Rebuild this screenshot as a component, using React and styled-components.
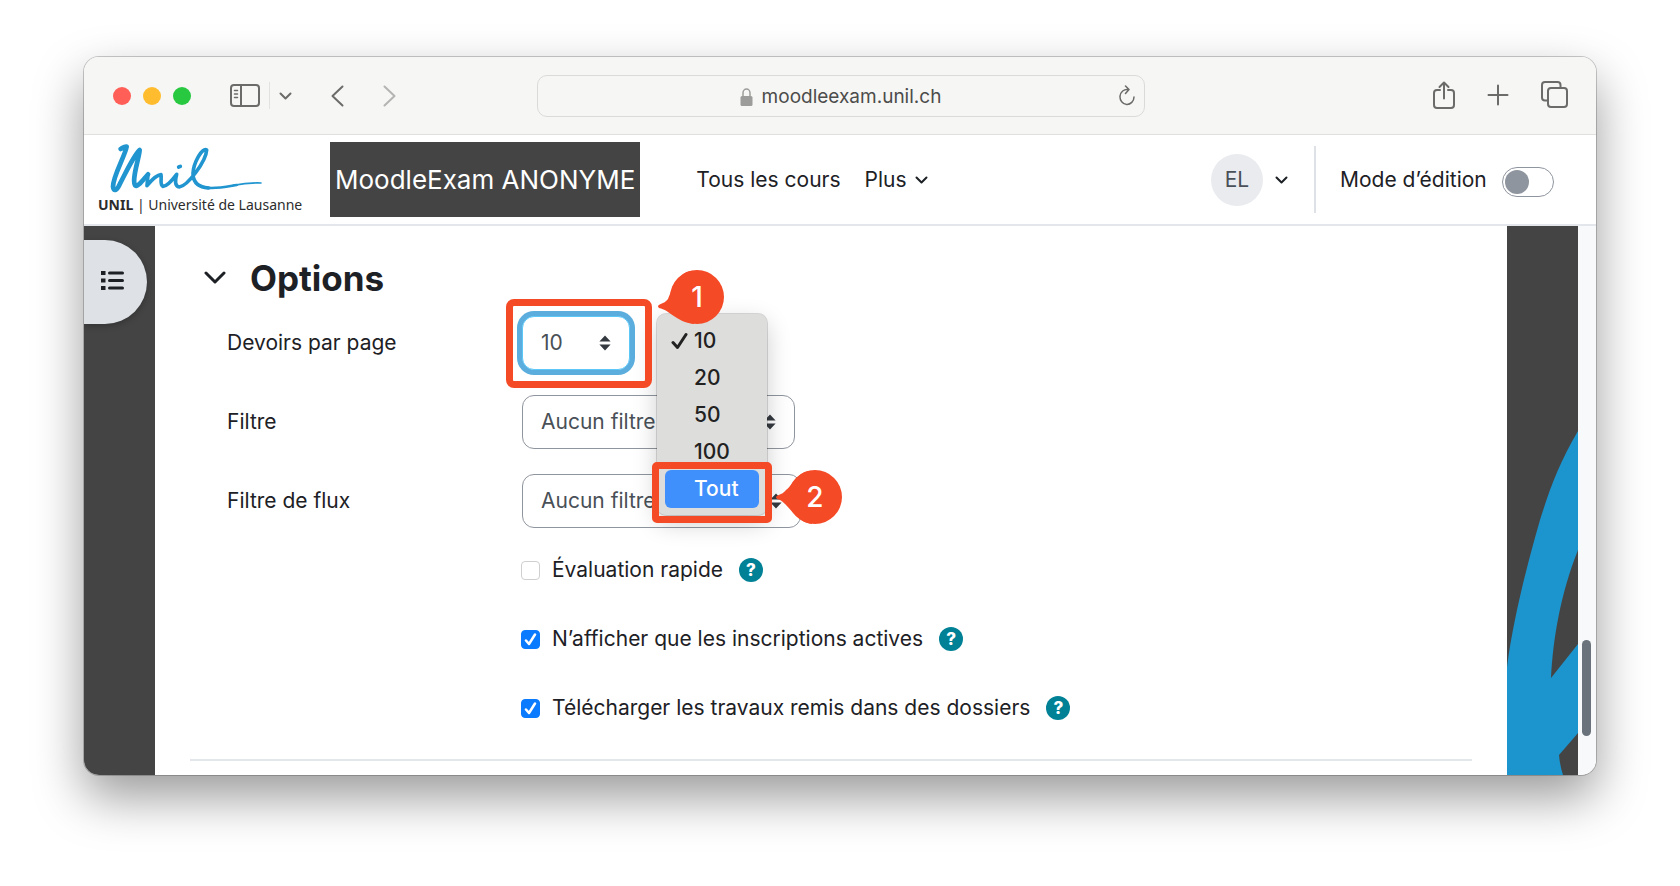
import { useState } from 'react';
import styled, { createGlobalStyle } from 'styled-components';

const GlobalStyle = createGlobalStyle`
	* {
		box-sizing: border-box;
	}

	body {
		margin: 0;
		background: #fff;
		color: #1d2125;
		font-family: Inter, "Liberation Sans", sans-serif;
		font-size: 21px;
		line-height: 32px;
	}

	button, input, select {
		margin: 0;
		font: inherit;
		color: inherit;
	}

	svg {
		display: block;
		flex: none;
	}
`;

const Desktop = styled.div`
	padding: 57px 84px 111px;
`;

const BrowserWindow = styled.div`
	overflow: hidden;
	border-radius: 15px;
	background: #fff;
	box-shadow: 0 0 0 1px rgba(0, 0, 0, .2), 0 22px 50px rgba(0, 0, 0, .4);
`;

// Browser toolbar
const Toolbar = styled.div`
	display: grid;
	grid-template-columns: 1fr minmax(0, 608px) 1fr;
	align-items: center;
	height: 78px;
	padding: 0 28px 0 29px;
	border-bottom: 1px solid #e0e0de;
	background: #f6f6f4;
	color: #6b6b69;
`;

const ToolbarSide = styled.div`
	display: flex;
	align-items: center;
	justify-content: ${({ $end }) => ($end ? 'flex-end' : 'flex-start')};
	gap: ${({ $gap }) => $gap}px;
`;

const SidebarGroup = styled.div`
	display: flex;
	align-items: center;
	gap: 9px;
`;

const Lights = styled.div`
	display: flex;
	gap: 12px;
`;

const Light = styled.button`
	width: 18px;
	height: 18px;
	padding: 0;
	border: 0;
	border-radius: 50%;
	background: ${({ $color }) => $color};
`;

const IconButton = styled.button`
	display: flex;
	padding: 0;
	border: 0;
	background: none;
	color: ${({ $muted }) => ($muted ? '#b4b4b2' : 'inherit')};
	cursor: pointer;
`;

const ToolbarRule = styled.span`
	width: 1px;
	height: 27px;
	background: #e2e2e0;
`;

const AddressBar = styled.div`
	display: grid;
	grid-template-columns: 1fr auto 1fr;
	align-items: center;
	height: 42px;
	padding: 0 8px;
	border: 1px solid #dadad8;
	border-radius: 10px;
`;

const Address = styled.div`
	display: flex;
	grid-column: 2;
	align-items: center;
	gap: 9px;
	padding-top: 2px;
	color: #4c4c4b;
	font-size: 19px;
`;

const ReloadSlot = styled.div`
	justify-self: end;
`;

// Site navigation
const Navbar = styled.header`
	display: flex;
	align-items: center;
	height: 91px;
	padding: 0 42px 0 14px;
	border-bottom: 2px solid #e3e6ea;
`;

const Brand = styled.a`
	display: flex;
	flex-direction: column;
	width: 232px;
	color: #2c2c2c;
	text-decoration: none;
`;

const Signature = styled.svg`
	margin-left: 12px;
`;

const BrandName = styled.span`
	font-family: "Noto Sans", sans-serif;
	font-size: 14px;
	line-height: 24px;
	white-space: nowrap;
`;

const SiteName = styled.div`
	display: flex;
	align-items: center;
	height: 75px;
	padding: 0 5px;
	background: #444;
	color: #fff;
	font-size: 26px;
	white-space: nowrap;
`;

const NavLinks = styled.nav`
	display: flex;
	align-items: center;
	gap: 24px;
	margin: 0 auto 0 56px;
`;

const NavLink = styled.a`
	display: flex;
	align-items: center;
	gap: 8px;
	color: inherit;
	text-decoration: none;
	white-space: nowrap;
`;

const UserButton = styled.button`
	display: flex;
	align-items: center;
	gap: 12px;
	padding: 0;
	border: 0;
	background: none;
	cursor: pointer;
`;

const Avatar = styled.span`
	display: grid;
	place-items: center;
	width: 52px;
	height: 52px;
	border-radius: 50%;
	background: #e9ebef;
	color: #495057;
`;

const EditMode = styled.label`
	display: flex;
	align-items: center;
	justify-content: space-between;
	gap: 12px;
	min-width: 240px;
	height: 67px;
	margin-left: 26px;
	padding-left: 24px;
	border-left: 2px solid #dee2e6;
	white-space: nowrap;
`;

const Switch = styled.input`
	appearance: none;
	display: flex;
	align-items: center;
	width: 52px;
	height: 30px;
	margin-top: 4px;
	padding: 2px;
	border: 1px solid #8f959e;
	border-radius: 15px;

	&::before {
		content: "";
		width: 24px;
		height: 24px;
		border-radius: 50%;
		background: #8f959e;
	}

	&:checked {
		justify-content: flex-end;
	}
`;

// Page
const Page = styled.div`
	display: flex;
	align-items: stretch;
`;

const SideBand = styled.aside`
	flex: none;
	width: 71px;
	padding-top: ${({ $top }) => $top || 0}px;
	background: #444;
`;

const DrawerToggle = styled.button`
	display: flex;
	align-items: center;
	width: 63px;
	height: 84px;
	padding: 0 0 0 16px;
	border: 0;
	border-radius: 0 42px 42px 0;
	background: #dee2e6;
	box-shadow: 0 2px 6px rgba(0, 0, 0, .25);
	cursor: pointer;
`;

const ScrollTrack = styled.div`
	flex: none;
	width: 18px;
	padding: 414px 5px 0 4px;
	background: #f8f9fa;
`;

const ScrollThumb = styled.div`
	height: 96px;
	border-radius: 5px;
	background: #6a737b;
`;

const Main = styled.main`
	flex: 1;
	min-width: 0;
	padding: 30px 35px 13px;
`;

const SectionTitle = styled.h3`
	display: flex;
	align-items: center;
	gap: 24px;
	margin: 0 0 16px;
	padding-left: 14px;
	font-size: 35px;
	font-weight: 700;
	line-height: 44px;
`;

const Fields = styled.div`
	display: grid;
	gap: 25px;
	padding-left: 37px;
`;

const Field = styled.div`
	display: grid;
	grid-template-columns: 295px 1fr;
	align-items: center;
`;

const Control = styled.div`
	position: relative;
	display: grid;
	justify-self: start;
	align-items: center;
	width: ${({ $width }) => $width}px;

	& > select, & > svg {
		grid-area: 1 / 1;
	}

	& > svg {
		justify-self: end;
		margin-right: 19px;
		pointer-events: none;
	}
`;

const Select = styled.select`
	appearance: none;
	width: 100%;
	height: 54px;
	padding: 0 48px 0 18px;
	border: 1px solid #8f959e;
	border-radius: 12px;
	background: #fff;
	color: #495057;
	outline: none;

	${({ $focused }) => $focused && `
		border-color: #5cc8fa;
		box-shadow: 0 0 0 5px #5aaddd;
	`}
`;

const Menu = styled.ul`
	position: absolute;
	z-index: 2;
	top: -2px;
	left: 135px;
	width: 110px;
	margin: 0;
	padding: 8px;
	border-radius: 9px;
	background: #dddddb;
	box-shadow: 0 0 0 1px rgba(0, 0, 0, .14), 0 8px 24px rgba(0, 0, 0, .2);
	list-style: none;
`;

const MenuItem = styled.li`
	display: flex;
	align-items: center;
	gap: 6px;
	height: 38px;
	margin-bottom: -1px;
	padding-left: 6px;
	border-radius: 6px;
	background: ${({ $active }) => ($active ? '#3f8ffc' : 'transparent')};
	color: ${({ $active }) => ($active ? '#fff' : '#222')};
	font-weight: 500;
	cursor: default;
`;

const TickSlot = styled.span`
	width: 17px;
`;

const Outline = styled.div`
	position: absolute;
	z-index: 3;
	top: ${({ $top }) => $top}px;
	left: ${({ $left }) => $left}px;
	width: ${({ $width }) => $width}px;
	height: ${({ $height }) => $height}px;
	border: 7px solid #f54a26;
	border-radius: ${({ $radius }) => $radius}px;
	pointer-events: none;
`;

const Callout = styled.div`
	position: absolute;
	z-index: 4;
	top: ${({ $top }) => $top}px;
	left: ${({ $left }) => $left}px;
	display: grid;
	width: 66px;
	height: 54px;
	color: #fff;
	font-size: 28px;
	font-weight: 500;

	& > * {
		grid-area: 1 / 1;
	}
`;

const CalloutNumber = styled.span`
	place-self: center end;
	width: 54px;
	text-align: center;
`;

const Checks = styled.div`
	display: grid;
	justify-items: start;
	gap: 37px;
	padding: 26px 0 0 331px;
`;

const CheckRow = styled.div`
	display: flex;
	align-items: center;
	gap: 16px;
`;

const CheckLabel = styled.label`
	display: flex;
	align-items: center;
	gap: 12px;
`;

const CheckBox = styled.span`
	display: grid;
	place-items: center;

	& > * {
		grid-area: 1 / 1;
	}

	& > svg {
		pointer-events: none;
	}
`;

const CheckInput = styled.input`
	appearance: none;
	width: 19px;
	height: 19px;
	border: 1px solid #cfcfcf;
	border-radius: 4px;
	background: #fff;

	&:checked {
		border-color: #0a7aff;
		background: #0a7aff;
	}
`;

const HelpButton = styled.button`
	display: grid;
	place-items: center;
	width: 24px;
	height: 24px;
	padding: 0;
	border: 0;
	border-radius: 50%;
	background: #008196;
	color: #fff;
	font-size: 17px;
	font-weight: 800;
	line-height: 24px;
	cursor: pointer;
`;

const Divider = styled.hr`
	margin: 35px 0 0;
	border: 0;
	border-top: 2px solid #e3e6ea;
`;

const Stroke = ({ width, height, weight = 2, children }) => (
	<svg
		width={width}
		height={height}
		viewBox={`0 0 ${width} ${height}`}
		fill='none'
		stroke='currentColor'
		strokeWidth={weight}
		strokeLinecap='round'
		strokeLinejoin='round'
		aria-hidden='true'
	>
		{children}
	</svg>
);

const Chevron = () => (
	<Stroke width={13} height={8}>
		<path d='M1.5 1.5l5 5 5-5' />
	</Stroke>
);

const Arrows = () => (
	<svg width='12' height='16' viewBox='0 0 12 16' fill='#343a40' aria-hidden='true'>
		<path d='M6 .5L11.6 6.4H.4zM6 15.5L.4 9.6h11.2z' />
	</svg>
);

const NumberedCallout = ({ number, top, left, tip }) => (
	<Callout $top={top} $left={left}>
		<svg width='66' height='54' viewBox='0 0 66 54' fill='#f54a26' aria-hidden='true'>
			<circle cx='39' cy='27' r='27' />
			<path d={`M32 1C20 4 15 17 10 ${tip - 7}C7 ${tip - 3} 4 ${tip - 3} 1 ${tip - 1}Q-1 ${tip} 1 ${tip + 2}C12 ${tip + 4} 18 52 36 54z`} />
		</svg>
		<CalloutNumber>{number}</CalloutNumber>
	</Callout>
);

const PAGE_SIZES = ['10', '20', '50', '100', 'Tout'];

const CHECKS = [
	{ id: 'quick', label: 'Évaluation rapide', checked: false },
	{ id: 'active', label: 'N’afficher que les inscriptions actives', checked: true },
	{ id: 'folders', label: 'Télécharger les travaux remis dans des dossiers', checked: true },
];

function BrowserToolbar() {
	return (
		<Toolbar>
			<ToolbarSide $gap={39}>
				<Lights>
					<Light $color='#ff5f57' aria-label='Fermer' />
					<Light $color='#febc2e' aria-label='Réduire' />
					<Light $color='#28c840' aria-label='Agrandir' />
				</Lights>
				<SidebarGroup>
					<IconButton aria-label='Barre latérale'>
						<Stroke width={30} height={24}>
							<rect x='1' y='1' width='28' height='21' rx='3' />
							<path d='M11 1v21' />
							<path d='M4.5 6.5h3M4.5 10h3M4.5 13.5h3' strokeWidth='1.5' />
						</Stroke>
					</IconButton>
					<ToolbarRule />
					<IconButton aria-label='Groupes d’onglets'>
						<Chevron />
					</IconButton>
				</SidebarGroup>
				<IconButton aria-label='Précédent'>
					<Stroke width={13} height={22}>
						<path d='M11.5 1.500L1.5 11l10 9.5' />
					</Stroke>
				</IconButton>
				<IconButton $muted aria-label='Suivant'>
					<Stroke width={13} height={22}>
						<path d='M1.5 1.500L11.5 11l-10 9.5' />
					</Stroke>
				</IconButton>
			</ToolbarSide>
			<AddressBar>
				<Address>
					<svg width='13' height='18' viewBox='0 0 13 18' fill='#9c9c9a' aria-hidden='true'>
						<rect x='.5' y='8' width='12' height='10' rx='1.5' />
						<path d='M3 8.500V5a3.500 4 0 0 1 7 0v3.500' fill='none' stroke='#9c9c9a' strokeWidth='1.5' />
					</svg>
					<span>moodleexam.unil.ch</span>
				</Address>
				<ReloadSlot>
					<IconButton aria-label='Recharger'>
						<Stroke width={18} height={22} weight={1.5}>
							<path d='M10 4.500a7 7.500 0 1 0 6 7.500M7.500 1l3.500 3.500-3.500 4' />
						</Stroke>
					</IconButton>
				</ReloadSlot>
			</AddressBar>
			<ToolbarSide $end $gap={32}>
				<IconButton aria-label='Partager'>
					<Stroke width={22} height={30}>
						<path d='M7 9H4a3 3 0 0 0-3 3v12a3 3 0 0 0 3 3h14a3 3 0 0 0 3-3V12a3 3 0 0 0-3-3h-3M11 17.500V1.500M6.500 6L11 1.500 15.500 6' />
					</Stroke>
				</IconButton>
				<IconButton aria-label='Nouvel onglet'>
					<Stroke width={22} height={24}>
						<path d='M11 1.500v19M1.500 11h19' />
					</Stroke>
				</IconButton>
				<IconButton aria-label='Vue des onglets'>
					<Stroke width={27} height={29}>
						<path d='M7 19.500H4a3 3 0 0 1-3-3V4a3 3 0 0 1 3-3h12.500a3 3 0 0 1 3 3v3' />
						<rect x='7' y='7' width='19' height='19' rx='3' />
					</Stroke>
				</IconButton>
			</ToolbarSide>
		</Toolbar>
	);
}

function SiteNavbar() {
	return (
		<Navbar>
			<Brand href='#' aria-label='UNIL'>
				<Signature width='152' height='50' viewBox='120 306 456 150' fill='none' stroke='#2095cf' strokeLinecap='round' strokeLinejoin='round' aria-hidden='true'>
					<path strokeWidth='14' d='M152 324C158 321 162 316 170 317C165 345 129 405 129 437C130 454 142 448 150 428C165 400 190 345 209 327C210 342 184 415 195 433C202 442 222 412 234 400' />
					<path strokeWidth='11' d='M234 400L231 434C244 418 258 402 273 401C276 412 268 430 279 436C292 436 308 416 320 400C315 418 314 436 328 438C352 435 408 362 410 327C397 318 370 365 369 398C370 430 390 438 415 441' />
					<path strokeWidth='8' d='M408 440C440 444 470 437 500 432' />
					<path strokeWidth='5' d='M490 433C520 427 545 425 573 426' />
					<path strokeWidth='11' d='M326 378l5-2' />
				</Signature>
				<BrandName><b>UNIL</b> | Université de Lausanne</BrandName>
			</Brand>
			<SiteName>MoodleExam ANONYME</SiteName>
			<NavLinks>
				<NavLink href='#'>Tous les cours</NavLink>
				<NavLink href='#'>Plus <Chevron /></NavLink>
			</NavLinks>
			<UserButton aria-label='Menu utilisateur'>
				<Avatar>EL</Avatar>
				<Chevron />
			</UserButton>
			<EditMode>
				Mode d’édition
				<Switch type='checkbox' role='switch' />
			</EditMode>
		</Navbar>
	);
}

function PageSizeField() {
	const [size, setSize] = useState('10');

	return (
		<Field>
			<label htmlFor='perpage'>Devoirs par page</label>
			<Control $width={108}>
				<Select id='perpage' $focused value={size} onChange={(e) => setSize(e.target.value)}>
					{PAGE_SIZES.map((value) => <option key={value}>{value}</option>)}
				</Select>
				<Arrows />
				<Menu role='listbox' aria-label='Devoirs par page'>
					{PAGE_SIZES.map((value) => (
						<MenuItem
							key={value}
							role='option'
							aria-selected={value === size}
							$active={value === 'Tout'}
							onClick={() => setSize(value)}
						>
							<TickSlot>
								{value === size && (
									<Stroke width={17} height={18} weight={3}>
										<path d='M2 10.500l4.500 5L15 2.500' />
									</Stroke>
								)}
							</TickSlot>
							{value}
						</MenuItem>
					))}
				</Menu>
				<Outline $top={-17} $left={-16} $width={146} $height={89} $radius={8} />
				<Outline $top={146} $left={130} $width={120} $height={61} $radius={5} />
				<NumberedCallout number='1' top={-46} left={136} tip={36} />
				<NumberedCallout number='2' top={154} left={254} tip={27} />
			</Control>
		</Field>
	);
}

function FilterField({ id, label, width }) {
	return (
		<Field>
			<label htmlFor={id}>{label}</label>
			<Control $width={width}>
				<Select id={id}>
					<option>Aucun filtre</option>
				</Select>
				<Arrows />
			</Control>
		</Field>
	);
}

function CheckField({ id, label, checked }) {
	const [on, setOn] = useState(checked);

	return (
		<CheckRow>
			<CheckLabel htmlFor={id}>
				<CheckBox>
					<CheckInput id={id} type='checkbox' checked={on} onChange={() => setOn(!on)} />
					{on && (
						<svg width='13' height='13' viewBox='0 0 13 13' fill='none' stroke='#fff' strokeWidth='2.500' strokeLinecap='round' strokeLinejoin='round' aria-hidden='true'>
							<path d='M2 7.500l3 3.500 6-9.500' />
						</svg>
					)}
				</CheckBox>
				{label}
			</CheckLabel>
			<HelpButton aria-label={`Aide sur ${label}`}>?</HelpButton>
		</CheckRow>
	);
}

export default function App() {
	return (
		<>
			<GlobalStyle />
			<Desktop>
				<BrowserWindow>
					<BrowserToolbar />
					<SiteNavbar />
					<Page>
						<SideBand $top={14}>
							<DrawerToggle aria-label='Ouvrir l’index du cours'>
								<Stroke width={26} height={24} weight={3}>
									<path d='M9.500 3h13M9.500 10.500h13M9.500 18h13' />
									<path d='M3 3h.5M3 10.500h.5M3 18h.5' strokeWidth='4' strokeLinecap='square' />
								</Stroke>
							</DrawerToggle>
						</SideBand>
						<Main>
							<SectionTitle>
								<Stroke width={22} height={14} weight={3}>
									<path d='M2 2l9 9 9-9' />
								</Stroke>
								Options
							</SectionTitle>
							<Fields>
								<PageSizeField />
								<FilterField id='filter' label='Filtre' width={273} />
								<FilterField id='workflow' label='Filtre de flux' width={279} />
							</Fields>
							<Checks>
								{CHECKS.map((check) => <CheckField key={check.id} {...check} />)}
							</Checks>
							<Divider />
						</Main>
						<SideBand>
							<svg width='71' height='549' viewBox='0 1 71 549' fill='#1c94cd' aria-hidden='true'>
								<path d='M71 206C52 238 42 266 33 295C20 340 6 395 0 442V550H56Q53 541 52 530L71 508V419L44 453C46 415 53 370 71 325z' />
							</svg>
						</SideBand>
						<ScrollTrack>
							<ScrollThumb />
						</ScrollTrack>
					</Page>
				</BrowserWindow>
			</Desktop>
		</>
	);
}
